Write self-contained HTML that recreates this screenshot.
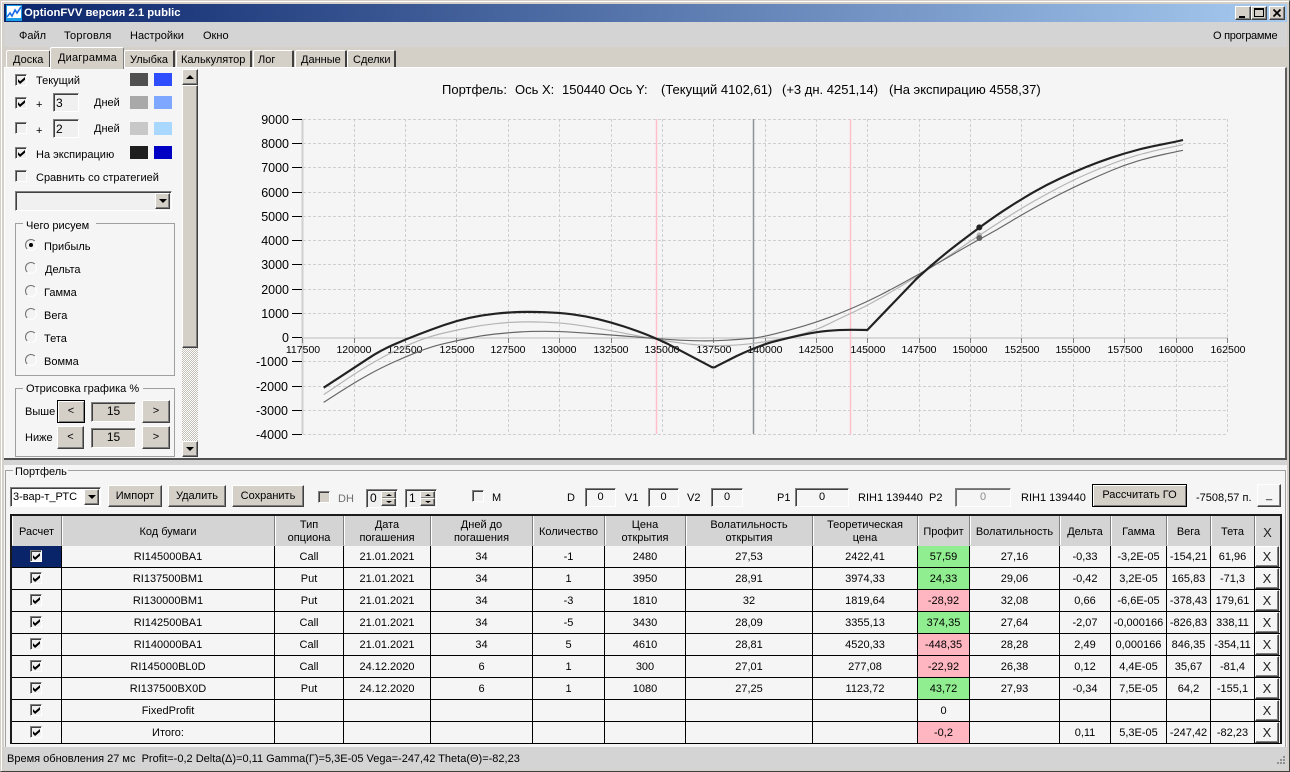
<!DOCTYPE html>
<html><head><meta charset="utf-8"><style>
html,body{margin:0;padding:0;width:1290px;height:772px;overflow:hidden;background:#d4d0c8}
body{position:relative;font:11px "Liberation Sans","DejaVu Sans",sans-serif;color:#000}
.a{position:absolute;box-sizing:border-box}
.t{position:absolute;white-space:pre;line-height:14px;height:14px}
.r{background:#d4d0c8;border:1px solid;border-color:#fff #404040 #404040 #fff;box-shadow:inset -1px -1px #808080;text-align:center}
.s{background:#f0f0f0;border:1px solid;border-color:#808080 #fff #fff #808080;box-shadow:inset 1px 1px #404040}
.cb{position:absolute;box-sizing:border-box;width:12px;height:12px;background:#f0f0f0;border:1px solid;border-color:#808080 #fff #fff #808080;box-shadow:inset 1px 1px #404040}
.cb.on::after{content:"";position:absolute;left:2px;top:2px;width:7px;height:7px;background:#000;clip-path:polygon(0 30%,30% 60%,100% 0,100% 40%,30% 100%,0 70%)}
.rd{position:absolute;box-sizing:border-box;width:12px;height:12px;border-radius:50%;background:#f3f3f3;border:1px solid;border-color:#707070 #fff #fff #707070}
.rd.on::after{content:"";position:absolute;left:3px;top:3px;width:4px;height:4px;border-radius:50%;background:#000}
.dn::after,.up::after{content:"";position:absolute;left:50%;top:50%;margin-left:-4px;width:0;height:0;border-left:4px solid transparent;border-right:4px solid transparent}
.dn::after{margin-top:-2px;border-top:4px solid #000}
.up::after{margin-top:-2px;border-bottom:4px solid #000}
.sm::after{margin-left:-3px;margin-top:-1px;border-left-width:3px;border-right-width:3px;border-top-width:2px;border-bottom-width:2px}
.g{position:absolute;box-sizing:border-box;border:1px solid #a0a0a0}
.tab{position:absolute;box-sizing:border-box;background:#d4d0c8;border-top:1px solid #fff;border-left:1px solid #fff;border-right:2px solid #404040;border-radius:2px 2px 0 0}
table{position:absolute;left:12px;top:516px;border-collapse:separate;border-spacing:0;table-layout:fixed;width:1268px}
th{font-weight:normal;height:30px;background:#d4d4d4;box-sizing:border-box;padding:3px 0 0;text-align:center;line-height:13px;border-right:1px solid #808080;box-shadow:inset 1px 0 #fff;border-bottom:1px solid #d4d4d4}
td{height:22px;box-sizing:border-box;padding:2px 0 0;text-align:center;border-right:1px solid #000;border-bottom:1px solid #000;background:#f5f5f5;position:relative;line-height:19px}
td:last-child,th:last-child{border-right:0}
td .cb{left:18px;top:4px}
.sel{background:#0a246a}
.gn{background:#90ee90}
.pk{background:#ffb6c1}
.x{position:absolute;left:0;top:0;width:24px;height:21px;font-size:13px;line-height:19px;font-weight:normal;background:#f5f5f5;color:#222}
</style></head><body>

<!-- frame -->
<div class="a" style="left:0;top:0;width:1290px;height:772px;background:#d4d0c8;border:1px solid;border-color:#d4d0c8 #404040 #404040 #d4d0c8;box-shadow:inset 1px 1px #fff"></div>
<!-- title -->
<div class="a" style="left:4px;top:4px;width:1283px;height:18px;background:linear-gradient(90deg,#0a246a,#a6caf0)"></div>
<svg class="a" style="left:6px;top:5px" width="16" height="16" viewBox="0 0 16 16"><rect width="16" height="16" fill="#1a9ce8"/><rect x="1" y="1" width="14" height="12" fill="#fff"/><path d="M1 12L4 8L6 11L9 5L11 8L15 2" fill="none" stroke="#1a6ce8" stroke-width="1.6"/></svg>
<div class="t" style="left:24px;top:6px;color:#fff;font-weight:bold;font-size:11.3px">OptionFVV версия 2.1 public</div>
<div class="a r" style="left:1235px;top:6px;width:16px;height:14px"><div class="a" style="left:3px;top:9px;width:6px;height:2px;background:#000"></div></div>
<div class="a r" style="left:1251px;top:6px;width:16px;height:14px"><div class="a" style="left:2px;top:1px;width:10px;height:9px;border:1px solid #000;border-top-width:2px"></div></div>
<div class="a r" style="left:1269px;top:6px;width:16px;height:14px"><svg class="a" style="left:2px;top:1px" width="11" height="10"><path d="M1.5 1.500L8.500 8.500M8.500 1.500L1.500 8.500" stroke="#000" stroke-width="1.700"/></svg></div>

<!-- menu -->
<div class="a" style="left:4px;top:22px;width:1283px;height:25px;background:#d4d4d4"></div>
<div class="t" style="left:19px;top:29px">Файл</div>
<div class="t" style="left:64px;top:29px;letter-spacing:.2px">Торговля</div>
<div class="t" style="left:130px;top:29px">Настройки</div>
<div class="t" style="left:203px;top:29px">Окно</div>
<div class="t" style="left:1213px;top:29px;letter-spacing:-.27px">О программе</div>

<!-- tabs -->
<div class="tab" style="left:6px;top:50px;width:45px;height:18px"></div><div class="t" style="left:13px;top:53px">Доска</div>
<div class="tab" style="left:124px;top:50px;width:51px;height:18px"></div><div class="t" style="left:130px;top:53px">Улыбка</div>
<div class="tab" style="left:176px;top:50px;width:76px;height:18px"></div><div class="t" style="left:181px;top:53px">Калькулятор</div>
<div class="tab" style="left:253px;top:50px;width:41px;height:18px"></div><div class="t" style="left:258px;top:53px">Лог</div>
<div class="tab" style="left:295px;top:50px;width:52px;height:18px"></div><div class="t" style="left:301px;top:53px">Данные</div>
<div class="tab" style="left:347px;top:50px;width:49px;height:18px"></div><div class="t" style="left:353px;top:53px">Сделки</div>

<!-- top page -->
<div class="a" style="left:4px;top:67px;width:1283px;height:391px;background:#f5f5f5;border-top:1px solid #fff;border-left:1px solid #fff;border-right:2px solid #606060"></div>
<div class="tab" style="left:50px;top:47px;width:74px;height:22px;border-right-width:1px;border-right-color:#808080"></div><div class="t" style="left:58px;top:51px;letter-spacing:.2px">Диаграмма</div>
<div class="a" style="left:4px;top:458px;width:1283px;height:2px;background:#505050"></div>
<div class="a" style="left:4px;top:460px;width:1283px;height:5px;background:#d4d4d4"></div>

<!-- left panel -->
<div class="cb on" style="left:15px;top:74px"></div><div class="t" style="left:36px;top:74px">Текущий</div>
<div class="a" style="left:130px;top:73px;width:18px;height:13px;background:#505050"></div><div class="a" style="left:154px;top:73px;width:18px;height:13px;background:#2e4dff"></div>
<div class="cb on" style="left:15px;top:97px"></div><div class="t" style="left:36px;top:98px">+</div>
<div class="a s" style="left:53px;top:93px;width:26px;height:19px"></div><div class="t" style="left:56px;top:96px;font-size:12px">3</div>
<div class="t" style="left:94px;top:96px">Дней</div>
<div class="a" style="left:130px;top:96px;width:18px;height:13px;background:#a9a9a9"></div><div class="a" style="left:154px;top:96px;width:18px;height:13px;background:#7ea8ff"></div>
<div class="cb" style="left:15px;top:122px"></div><div class="t" style="left:36px;top:124px">+</div>
<div class="a s" style="left:53px;top:119px;width:26px;height:19px"></div><div class="t" style="left:56px;top:122px;font-size:12px">2</div>
<div class="t" style="left:94px;top:122px">Дней</div>
<div class="a" style="left:130px;top:122px;width:18px;height:13px;background:#c8c8c8"></div><div class="a" style="left:154px;top:122px;width:18px;height:13px;background:#a8d8ff"></div>
<div class="cb on" style="left:15px;top:147px"></div><div class="t" style="left:36px;top:148px">На экспирацию</div>
<div class="a" style="left:130px;top:146px;width:18px;height:13px;background:#1e1e1e"></div><div class="a" style="left:154px;top:146px;width:18px;height:13px;background:#0000c4"></div>
<div class="cb" style="left:15px;top:170px"></div><div class="t" style="left:36px;top:171px">Сравнить со стратегией</div>
<div class="a s" style="left:15px;top:191px;width:157px;height:20px"><div class="a r dn" style="left:139px;top:1px;width:15px;height:16px"></div></div>

<div class="g" style="left:15px;top:223px;width:160px;height:153px"></div>
<div class="a" style="left:23px;top:218px;width:73px;height:12px;background:#f5f5f5"></div><div class="t" style="left:26px;top:219px">Чего рисуем</div>
<div class="rd on" style="left:25px;top:239px"></div><div class="t" style="left:44px;top:240px">Прибыль</div>
<div class="rd" style="left:25px;top:262px"></div><div class="t" style="left:45px;top:263px">Дельта</div>
<div class="rd" style="left:25px;top:285px"></div><div class="t" style="left:44px;top:286px">Гамма</div>
<div class="rd" style="left:25px;top:308px"></div><div class="t" style="left:44px;top:309px">Вега</div>
<div class="rd" style="left:25px;top:331px"></div><div class="t" style="left:44px;top:332px">Тета</div>
<div class="rd" style="left:25px;top:354px"></div><div class="t" style="left:44px;top:355px">Вомма</div>

<div class="g" style="left:15px;top:388px;width:160px;height:69px"></div>
<div class="a" style="left:23px;top:383px;width:120px;height:12px;background:#f5f5f5"></div><div class="t" style="left:26px;top:382px">Отрисовка графика %</div>
<div class="t" style="left:25px;top:405px">Выше</div>
<div class="a r" style="left:57px;top:400px;width:28px;height:23px;border-color:#000;box-shadow:inset 1px 1px #fff,inset -1px -1px #808080;line-height:20px">&lt;</div>
<div class="a s" style="left:91px;top:402px;width:45px;height:20px;background:#d4d0c8;text-align:center;line-height:17px;font-size:12px">15</div>
<div class="a r" style="left:142px;top:400px;width:28px;height:23px;line-height:20px">&gt;</div>
<div class="t" style="left:25px;top:431px">Ниже</div>
<div class="a r" style="left:57px;top:426px;width:27px;height:23px;line-height:20px">&lt;</div>
<div class="a s" style="left:91px;top:428px;width:45px;height:20px;background:#d4d0c8;text-align:center;line-height:17px;font-size:12px">15</div>
<div class="a r" style="left:142px;top:426px;width:28px;height:23px;line-height:20px">&gt;</div>

<!-- scrollbar -->
<div class="a" style="left:182px;top:69px;width:16px;height:388px;background:repeating-conic-gradient(#fff 0 25%,#c4c0b8 0 50%) 0 0/2px 2px"></div>
<div class="a r up" style="left:182px;top:69px;width:16px;height:16px"></div>
<div class="a r" style="left:182px;top:85px;width:16px;height:263px"></div>
<div class="a r dn" style="left:182px;top:441px;width:16px;height:16px"></div>

<!-- chart -->
<svg class="a" style="left:0;top:0" width="1290" height="772" viewBox="0 0 1290 772">
<g stroke="#cfcfcf" stroke-width="1" stroke-dasharray="3 2" fill="none">
<path d="M354.500 119V434M405.500 119V434M456.500 119V434M508.500 119V434M559.500 119V434M611.500 119V434M662.500 119V434M713.500 119V434M765.500 119V434M816.500 119V434M867.500 119V434M919.500 119V434M970.500 119V434M1021.500 119V434M1073.500 119V434M1124.500 119V434M1176.500 119V434M1227.500 119V434"/>
<path d="M303 119.500H1228M303 143.500H1228M303 167.500H1228M303 192.500H1228M303 216.500H1228M303 240.500H1228M303 264.500H1228M303 289.500H1228M303 313.500H1228M303 361.500H1228M303 386.500H1228M303 410.500H1228M303 434.500H1228"/>
</g>
<path d="M303 338H1228" stroke="#d8d8d8" stroke-width="2"/>
<path d="M302.500 119V434" stroke="#d0d0d0" stroke-width="2"/>
<path d="M656.500 119V434M850.500 119V434" stroke="#ffc0cb" stroke-width="1.500"/>
<path d="M753.500 119V434" stroke="#8d929b" stroke-width="1.500"/>
<path d="M292 119.500H302M292 143.500H302M292 167.500H302M292 192.500H302M292 216.500H302M292 240.500H302M292 264.500H302M292 289.500H302M292 313.500H302M292 337.500H302M292 361.500H302M292 386.500H302M292 410.500H302M292 434.500H302" stroke="#000" stroke-width="1"/>
<path d="M302.500 338v5M354.500 338v5M405.500 338v5M456.500 338v5M508.500 338v5M559.500 338v5M611.500 338v5M662.500 338v5M713.500 338v5M765.500 338v5M816.500 338v5M867.500 338v5M919.500 338v5M970.500 338v5M1021.500 338v5M1073.500 338v5M1124.500 338v5M1176.500 338v5M1227.500 338v5" stroke="#808080" stroke-width="1"/>
<g font-family="Liberation Sans" font-size="12.500" text-anchor="end" fill="#000">
<text x="289" y="124">9000</text><text x="289" y="148">8000</text><text x="289" y="172">7000</text><text x="289" y="197">6000</text><text x="289" y="221">5000</text><text x="289" y="245">4000</text><text x="289" y="269">3000</text><text x="289" y="294">2000</text><text x="289" y="318">1000</text><text x="289" y="342">0</text><text x="288" y="366">-1000</text><text x="288" y="391">-2000</text><text x="288" y="415">-3000</text><text x="288" y="439">-4000</text>
</g>
<g font-family="Liberation Sans" font-size="10.500" text-anchor="middle" fill="#000">
<text x="303" y="353">117500</text><text x="354" y="353">120000</text><text x="405" y="353">122500</text><text x="457" y="353">125000</text><text x="508" y="353">127500</text><text x="559" y="353">130000</text><text x="611" y="353">132500</text><text x="662" y="353">135000</text><text x="714" y="353">137500</text><text x="765" y="353">140000</text><text x="816" y="353">142500</text><text x="868" y="353">145000</text><text x="919" y="353">147500</text><text x="970" y="353">150000</text><text x="1022" y="353">152500</text><text x="1073" y="353">155000</text><text x="1125" y="353">157500</text><text x="1176" y="353">160000</text><text x="1228" y="353">162500</text>
</g>
<g transform="translate(280 100) scale(.33333)" fill="none" stroke-linejoin="round" stroke-linecap="butt">
<path stroke="#b4b4b4" stroke-width="3.500" d="M131 884L177 853Q223 822 261.500 798.500Q300 775 338.500 756Q377 737 415 722.500Q453 708 491.500 699Q530 690 569 682.500Q608 675 646.500 671Q685 667 717.500 666Q750 665 794 666.500Q838 668 876.500 673Q915 678 954.500 685Q994 692 1032 699.500Q1070 707 1100 712.500Q1130 718 1177.500 725.500Q1225 733 1263 735.500Q1301 738 1340.500 736.500Q1380 735 1410 731.500Q1440 728 1485 720Q1530 712 1569.500 701Q1609 690 1644.500 672.500Q1680 655 1721 636Q1762 617 1801 594.500Q1840 572 1879 548.500Q1918 525 1954 502Q1990 479 2030.500 451.500Q2071 424 2110.500 398Q2150 372 2187 348.500Q2224 325 2262 303.500Q2300 282 2340 261Q2380 240 2417.500 223.500Q2455 207 2494 192Q2533 177 2571.500 166Q2610 155 2649.500 146.500Q2689 138 2709 134"/>
<path stroke="#666" stroke-width="3.500" d="M131 907L177 877.500Q223 848 261.500 826.500Q300 805 338.500 787.500Q377 770 415 755Q453 740 491.500 731Q530 722 569 714Q608 706 646.500 702Q685 698 717.500 696Q750 694 794 694Q838 694 876.500 696.500Q915 699 954.500 702Q994 705 1032 708Q1070 711 1100 713.500Q1130 716 1177.500 719Q1225 722 1263 722.500Q1301 723 1340.500 720.500Q1380 718 1410 715.500Q1440 713 1485 701.500Q1530 690 1569.500 678.500Q1609 667 1644.500 653.500Q1680 640 1721 622.500Q1762 605 1801 585Q1840 565 1879 543.500Q1918 522 1954 501Q1990 480 2030.500 456.500Q2071 433 2110.500 411.500Q2150 390 2187 367.500Q2224 345 2262 324Q2300 303 2340 282.500Q2380 262 2417.500 245Q2455 228 2494 211.500Q2533 195 2571.500 183.500Q2610 172 2649.500 163.500Q2689 155 2709 151"/>
<path stroke="#222" stroke-width="6.500" d="M131 863L177 833Q223 803 261.500 777.500Q300 752 338.500 735Q377 718 415 703.500Q453 689 491.500 675.500Q530 662 569 653.500Q608 645 646.500 641Q685 637 717.500 636Q750 635 794 636.500Q838 638 876.500 643Q915 648 954.500 657.500Q994 667 1032 679.500Q1070 692 1100 704Q1130 716 1160 730L1293 800Q1301 805 1309 799L1370 768Q1440 735 1485 724Q1530 712 1569.500 704Q1609 696 1644.500 692.500Q1680 689 1721 689.500L1762 690L1905 541Q1918 528 1954 496.500Q1990 465 2030.500 434Q2071 403 2110.500 374Q2150 345 2187 321.500Q2224 298 2262 276Q2300 254 2340 235.500Q2380 217 2417.500 201.500Q2455 186 2494 173Q2533 160 2571.500 150Q2610 140 2649.500 132.500Q2689 125 2709 120"/>
<circle cx="2098" cy="405" r="8" fill="#b4b4b4"/><circle cx="2098" cy="414" r="9" fill="#606060"/><circle cx="2098" cy="382" r="9" fill="#222"/>
</g>
<g font-family="Liberation Sans" font-size="13" fill="#000">
<text x="442" y="94">Портфель:</text><text x="515" y="94">Ось X:</text><text x="562" y="94">150440</text><text x="609" y="94">Ось Y:</text><text x="661" y="94">(Текущий 4102,61)</text><text x="782" y="94">(+3 дн. 4251,14)</text><text x="889" y="94">(На экспирацию 4558,37)</text>
</g>
</svg>

<!-- bottom page -->
<div class="a" style="left:4px;top:465px;width:1283px;height:282px;background:#f5f5f5"></div>
<div class="g" style="left:5px;top:470px;width:1281px;height:277px;border-bottom:0"></div>
<div class="a" style="left:13px;top:465px;width:55px;height:12px;background:#f5f5f5"></div><div class="t" style="left:15px;top:465px">Портфель</div>

<div class="a s" style="left:10px;top:487px;width:91px;height:20px;background:#fff;line-height:19px;padding-left:2px">3-вар-т_РТС<div class="a r dn" style="left:73px;top:1px;width:15px;height:16px"></div></div>
<div class="a r" style="left:108px;top:485px;width:54px;height:22px;line-height:21px">Импорт</div>
<div class="a r" style="left:168px;top:485px;width:58px;height:22px;line-height:21px">Удалить</div>
<div class="a r" style="left:232px;top:485px;width:72px;height:22px;line-height:21px">Сохранить</div>
<div class="cb" style="left:318px;top:491px;background:#d4d0c8"></div><div class="t" style="left:338px;top:492px;color:#707070">DH</div>
<div class="a s" style="left:366px;top:489px;width:32px;height:19px;background:#f0f0f0;padding-left:3px;line-height:17px;font-size:12px">0<div class="a r up sm" style="left:14px;top:1px;width:15px;height:8px"></div><div class="a r dn sm" style="left:14px;top:8px;width:15px;height:8px"></div></div>
<div class="a s" style="left:405px;top:489px;width:32px;height:19px;background:#f0f0f0;padding-left:3px;line-height:17px;font-size:12px">1<div class="a r up sm" style="left:14px;top:1px;width:15px;height:8px"></div><div class="a r dn sm" style="left:14px;top:8px;width:15px;height:8px"></div></div>
<div class="cb" style="left:472px;top:490px"></div><div class="t" style="left:492px;top:491px">M</div>
<div class="t" style="left:567px;top:491px">D</div><div class="a s" style="left:585px;top:488px;width:31px;height:19px;background:#f5f5f5;text-align:center;line-height:17px">0</div>
<div class="t" style="left:625px;top:491px">V1</div><div class="a s" style="left:648px;top:488px;width:31px;height:19px;background:#f5f5f5;text-align:center;line-height:17px">0</div>
<div class="t" style="left:687px;top:491px">V2</div><div class="a s" style="left:711px;top:488px;width:32px;height:19px;background:#f5f5f5;text-align:center;line-height:17px">0</div>
<div class="t" style="left:777px;top:491px">P1</div><div class="a s" style="left:795px;top:488px;width:54px;height:19px;background:#f5f5f5;text-align:center;line-height:17px">0</div>
<div class="t" style="left:858px;top:491px">RIH1 139440</div>
<div class="t" style="left:929px;top:491px">P2</div><div class="a s" style="left:955px;top:488px;width:56px;height:19px;background:#f5f5f5;box-shadow:inset 1px 1px #707070;text-align:center;line-height:17px;color:#8a8a8a">0</div>
<div class="t" style="left:1021px;top:491px">RIH1 139440</div>
<div class="a r" style="left:1092px;top:484px;width:95px;height:23px;border-color:#000;box-shadow:inset 1px 1px #fff,inset -1px -1px #808080;line-height:20px">Рассчитать ГО</div>
<div class="t" style="left:1196px;top:491px">-7508,57 п.</div>
<div class="a r" style="left:1257px;top:484px;width:24px;height:23px;line-height:20px;background:#f5f5f5">_</div>

<!-- grid -->
<div class="a" style="left:10px;top:514px;width:1272px;height:230px;border:2px solid #1a1a1a;border-bottom:0;background:#f5f5f5"></div>
<table>
<colgroup><col style="width:50px"><col style="width:213px"><col style="width:69px"><col style="width:87px"><col style="width:102px"><col style="width:72px"><col style="width:81px"><col style="width:127px"><col style="width:105px"><col style="width:52px"><col style="width:90px"><col style="width:51px"><col style="width:56px"><col style="width:44px"><col style="width:44px"><col style="width:25px"></colgroup>
<tr><th>Расчет</th><th>Код бумаги</th><th>Тип<br>опциона</th><th>Дата<br>погашения</th><th>Дней до<br>погашения</th><th>Количество</th><th>Цена<br>открытия</th><th>Волатильность<br>открытия</th><th>Теоретическая<br>цена</th><th>Профит</th><th>Волатильность</th><th>Дельта</th><th>Гамма</th><th>Вега</th><th>Тета</th><th style="font-size:13px;color:#222">X</th></tr>
<tr><td class="sel"><div class="cb on"></div></td><td>RI145000BA1</td><td>Call</td><td>21.01.2021</td><td>34</td><td>-1</td><td>2480</td><td>27,53</td><td>2422,41</td><td class="gn">57,59</td><td>27,16</td><td>-0,33</td><td>-3,2E-05</td><td>-154,21</td><td>61,96</td><td><div class="x a r">X</div></td></tr>
<tr><td><div class="cb on"></div></td><td>RI137500BM1</td><td>Put</td><td>21.01.2021</td><td>34</td><td>1</td><td>3950</td><td>28,91</td><td>3974,33</td><td class="gn">24,33</td><td>29,06</td><td>-0,42</td><td>3,2E-05</td><td>165,83</td><td>-71,3</td><td><div class="x a r">X</div></td></tr>
<tr><td><div class="cb on"></div></td><td>RI130000BM1</td><td>Put</td><td>21.01.2021</td><td>34</td><td>-3</td><td>1810</td><td>32</td><td>1819,64</td><td class="pk">-28,92</td><td>32,08</td><td>0,66</td><td>-6,6E-05</td><td>-378,43</td><td>179,61</td><td><div class="x a r">X</div></td></tr>
<tr><td><div class="cb on"></div></td><td>RI142500BA1</td><td>Call</td><td>21.01.2021</td><td>34</td><td>-5</td><td>3430</td><td>28,09</td><td>3355,13</td><td class="gn">374,35</td><td>27,64</td><td>-2,07</td><td>-0,000166</td><td>-826,83</td><td>338,11</td><td><div class="x a r">X</div></td></tr>
<tr><td><div class="cb on"></div></td><td>RI140000BA1</td><td>Call</td><td>21.01.2021</td><td>34</td><td>5</td><td>4610</td><td>28,81</td><td>4520,33</td><td class="pk">-448,35</td><td>28,28</td><td>2,49</td><td>0,000166</td><td>846,35</td><td>-354,11</td><td><div class="x a r">X</div></td></tr>
<tr><td><div class="cb on"></div></td><td>RI145000BL0D</td><td>Call</td><td>24.12.2020</td><td>6</td><td>1</td><td>300</td><td>27,01</td><td>277,08</td><td class="pk">-22,92</td><td>26,38</td><td>0,12</td><td>4,4E-05</td><td>35,67</td><td>-81,4</td><td><div class="x a r">X</div></td></tr>
<tr><td><div class="cb on"></div></td><td>RI137500BX0D</td><td>Put</td><td>24.12.2020</td><td>6</td><td>1</td><td>1080</td><td>27,25</td><td>1123,72</td><td class="gn">43,72</td><td>27,93</td><td>-0,34</td><td>7,5E-05</td><td>64,2</td><td>-155,1</td><td><div class="x a r">X</div></td></tr>
<tr><td><div class="cb on"></div></td><td>FixedProfit</td><td></td><td></td><td></td><td></td><td></td><td></td><td></td><td>0</td><td></td><td></td><td></td><td></td><td></td><td><div class="x a r">X</div></td></tr>
<tr><td><div class="cb on"></div></td><td>Итого:</td><td></td><td></td><td></td><td></td><td></td><td></td><td></td><td class="pk">-0,2</td><td></td><td>0,11</td><td>5,3E-05</td><td>-247,42</td><td>-82,23</td><td><div class="x a r">X</div></td></tr>
</table>

<!-- status -->
<div class="a" style="left:4px;top:747px;width:1283px;height:23px;background:#d4d4d4"></div>
<div class="t" style="left:7px;top:752px">Время обновления 27 мс  Profit=-0,2 Delta(Δ)=0,11 Gamma(Г)=5,3E-05 Vega=-247,42 Theta(Θ)=-82,23</div>
<svg class="a" style="left:1272px;top:755px" width="14" height="12"><path d="M11 1h2v2h-2zM8 4h2v2H8zM11 4h2v2h-2zM5 7h2v2H5zM8 7h2v2H8zM11 7h2v2h-2z" fill="#909090"/></svg>
</body></html>
